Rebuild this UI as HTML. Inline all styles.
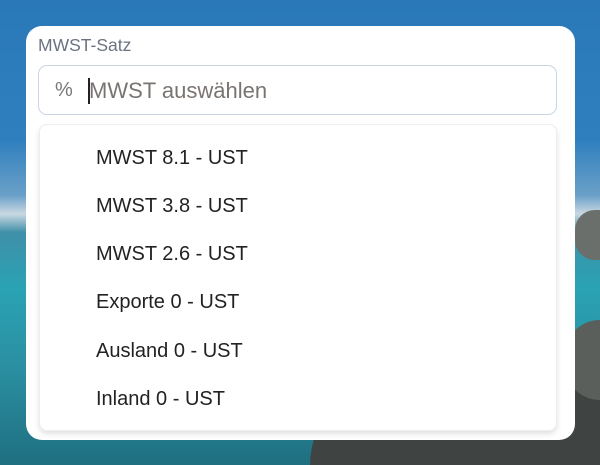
<!DOCTYPE html>
<html><head><style>
html,body{margin:0;padding:0;width:600px;height:465px;overflow:hidden;font-family:"Liberation Sans",sans-serif}
.wrap{position:relative;width:600px;height:465px;overflow:hidden}
.bg{position:absolute;left:0;top:0;width:600px;height:465px;background:linear-gradient(180deg,#2a78b8 0%,#2f7fbe 30%,#6aa0c8 42%,#c9d8e2 46%,#3f8fa8 50%,#2aa3b4 62%,#2a8ea0 80%,#1f6f80 100%)}
.card{position:absolute;left:26px;top:26px;width:549px;height:414px;background:#fff;border-radius:16px}
.label{position:absolute;left:38px;top:35px;font-size:17.5px;color:#6b7280}
.input{position:absolute;left:38px;top:65px;width:517px;height:48px;border:1.5px solid #c9d5e3;border-radius:9px;background:#fff}
.pct{position:absolute;left:16px;top:13px;font-size:20px;color:#777}
.caret{position:absolute;left:49px;top:12px;width:1.5px;height:26px;background:#222}
.ph{position:absolute;left:50px;top:12px;font-size:22px;color:#7a7470}
.dd{position:absolute;left:39px;top:124px;width:516px;height:305px;background:#fff;border:1px solid #eceef2;border-radius:8px;box-shadow:0 3px 6px rgba(0,0,0,.12)}
.it{position:absolute;left:56px;font-size:20px;color:#222}
</style></head><body><div class="wrap">
<div class="bg"></div>
<div style="position:absolute;left:310px;top:380px;width:290px;height:85px;background:#3f4442;border-radius:120px 0 0 0"></div>
<div style="position:absolute;left:565px;top:320px;width:35px;height:80px;background:#5a5f5c;border-radius:40px 0 0 40px"></div>
<div style="position:absolute;left:575px;top:210px;width:25px;height:50px;background:#6b6f6c;border-radius:20px 0 0 20px"></div>
<div class="card"></div>
<div class="label">MWST-Satz</div>
<div class="input"><span class="pct">%</span><div class="caret"></div><span class="ph">MWST auswählen</span></div>
<div class="dd">
<div class="it" style="top:22px">MWST 8.1 - UST</div>
<div class="it" style="top:70px">MWST 3.8 - UST</div>
<div class="it" style="top:118px">MWST 2.6 - UST</div>
<div class="it" style="top:166px">Exporte 0 - UST</div>
<div class="it" style="top:215px">Ausland 0 - UST</div>
<div class="it" style="top:263px">Inland 0 - UST</div>
</div>
</div></body></html>
